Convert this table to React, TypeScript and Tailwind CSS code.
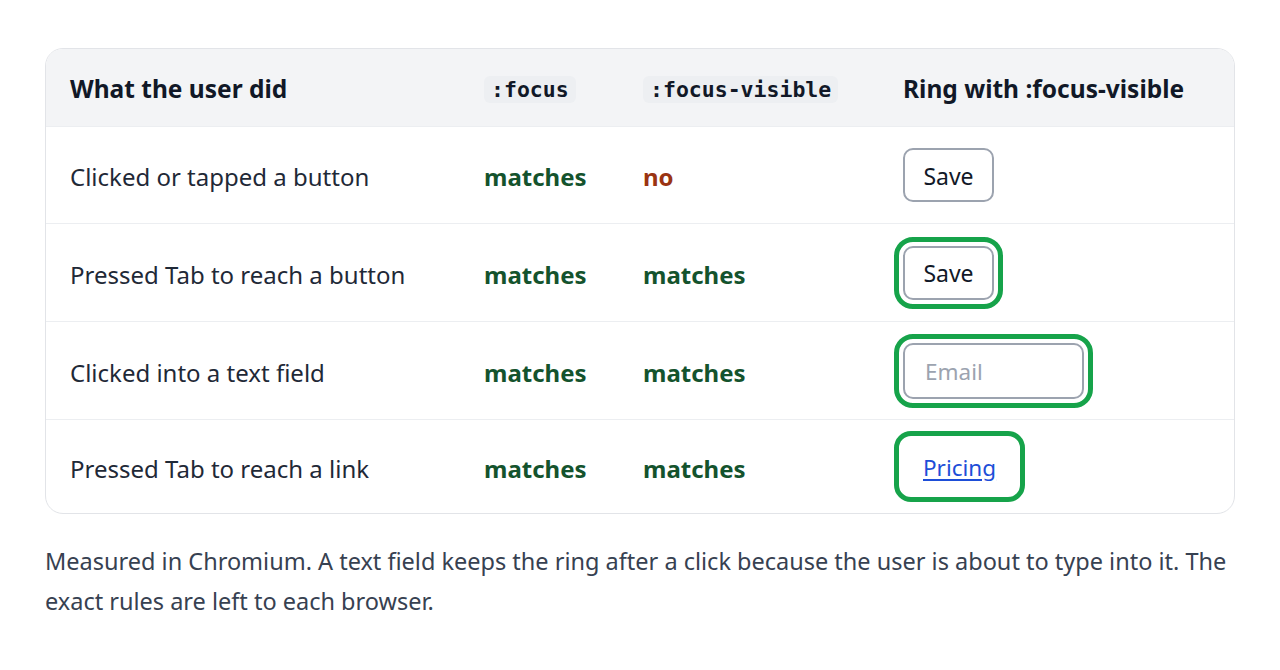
import React from "react";

const sans = { fontFamily: '"Noto Sans", "Open Sans", sans-serif' };

function Code({ children }: { children: React.ReactNode }) {
  return (
    <code
      className="inline-block rounded-md bg-[#edeff2] px-[7px] text-[21.5px] font-bold leading-[27px] text-[#111827]"
      style={{ fontFamily: '"DejaVu Sans Mono", "Liberation Mono", monospace' }}
    >
      {children}
    </code>
  );
}

function Yes() {
  return <span className="font-bold text-[#14532d]">matches</span>;
}

function No() {
  return <span className="font-bold text-[#9a3412]">no</span>;
}

const ring = "outline-[5px] outline-offset-[4px] outline-solid outline-[#16a34a]";

function SaveBtn({ focused }: { focused?: boolean }) {
  return (
    <button
      className={
        "h-[54px] w-[91px] rounded-[10px] border-2 border-[#9ca3af] bg-white pt-[2px] text-[23px] text-[#111827] " +
        (focused ? ring : "")
      }
      style={sans}
    >
      Save
    </button>
  );
}

function Row({
  h,
  label,
  a,
  b,
  ctrl,
}: {
  h: string;
  label: string;
  a: React.ReactNode;
  b: React.ReactNode;
  ctrl: React.ReactNode;
}) {
  const txt = "flex items-center pl-6 pt-[4px] " + h;
  return (
    <div className="grid grid-cols-[414px_159px_260px_1fr] border-t border-[#eceef1]">
      <div className={txt}>{label}</div>
      <div className={txt}>{a}</div>
      <div className={txt}>{b}</div>
      <div className={"flex items-center pl-6 " + h}>{ctrl}</div>
    </div>
  );
}

export default function App() {
  const head = "flex h-[77px] items-center pl-6 pt-[4px]";
  return (
    <div className="min-h-[670px] bg-white px-[45px] pt-[48px]" style={sans}>
      <div className="overflow-hidden rounded-[18px] border border-[#e2e4e8] text-[24px] text-[#1f2937]">
        <div className="grid grid-cols-[414px_159px_260px_1fr] bg-[#f3f4f6] text-[24.5px] font-bold text-[#111827]">
          <div className={head}>What the user did</div>
          <div className={head}>
            <Code>:focus</Code>
          </div>
          <div className={head}>
            <Code>:focus-visible</Code>
          </div>
          <div className={head}>Ring with :focus-visible</div>
        </div>

        <Row h="h-[96px]" label="Clicked or tapped a button" a={<Yes />} b={<No />} ctrl={<SaveBtn />} />
        <Row h="h-[97px]" label="Pressed Tab to reach a button" a={<Yes />} b={<Yes />} ctrl={<SaveBtn focused />} />
        <Row
          h="h-[97px]"
          label="Clicked into a text field"
          a={<Yes />}
          b={<Yes />}
          ctrl={
            <div
              className={
                "flex h-[56px] w-[181px] items-center rounded-[10px] border-2 border-[#9ca3af] bg-white px-[20px] pt-[2px] text-[22.5px] text-[#9ca3af] " +
                ring
              }
            >
              Email
            </div>
          }
        />
        <Row
          h="h-[93px]"
          label="Pressed Tab to reach a link"
          a={<Yes />}
          b={<Yes />}
          ctrl={
            <a
              href="#"
              className={
                "inline-block rounded-[8px] px-[20px] pt-[11px] pb-[9px] text-[22.5px] leading-[33px] text-[#1d4ed8] underline underline-offset-[3px] " +
                ring
              }
            >
              Pricing
            </a>
          }
        />
      </div>

      <p className="mt-[27px] text-[23.5px] leading-[40px] text-[#374151]">
        Measured in Chromium. A text field keeps the ring after a click because the user is about to type into it. The
        exact rules are left to each browser.
      </p>
    </div>
  );
}
